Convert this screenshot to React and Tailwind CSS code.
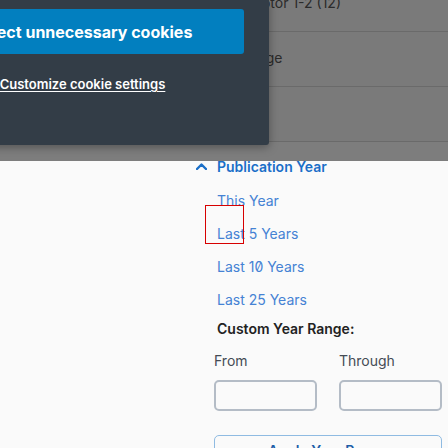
export default function App() {
  const links = ["This Year", "Last 5 Years", "Last 10 Years", "Last 25 Years"];
  const rows = ["Locomotor 1-2 (12)", "Language", "Format"];
  return (
    <div className="relative w-[448px] h-[448px] overflow-hidden bg-[#fafafa] font-['Inter',sans-serif] [font-feature-settings:'zero']">
      <div className="mt-[-23px] bg-[#f4f4f4]">
        {rows.map((r) => (
          <div
            key={r}
            className="h-[55px] border-b border-[#d4d4d4] pl-[217px] pt-[15px] text-[14px] leading-[22px] text-[#565656]"
          >
            {r}
          </div>
        ))}
      </div>

      <section className="pl-[196px] pt-[15px]">
        <div className="flex items-center gap-[10px] h-[20px]">
          <svg width="11" height="7" viewBox="0 0 11 7" className="mt-[-1px]">
            <polyline
              points="1,6 5.5,1.5 10,6"
              fill="none"
              stroke="#1a6fc8"
              strokeWidth="2.4"
              strokeLinecap="round"
              strokeLinejoin="round"
            />
          </svg>
          <span className="text-[14px] leading-[20px] font-semibold text-[#1a6fc8]">
            Publication Year
          </span>
        </div>

        <ul className="mt-[14px] flex flex-col gap-[13px] pl-[21px]">
          {links.map((l) => (
            <li key={l} className="text-[14px] leading-[20px] text-[#4582d4]">
              {l}
            </li>
          ))}
        </ul>

        <div className="mt-[9px] pl-[21px] text-[14px] leading-[20px] font-semibold text-[#222]">
          Custom Year Range:
        </div>

        <div className="mt-[12px] pl-[18px] w-[246px]">
          <div className="grid grid-cols-2 gap-[22px]">
            <div className="flex flex-col">
              <span className="text-[14px] leading-[20px] text-[#444b55]">From</span>
              <div className="mt-[9px] h-[31px] rounded-[5px] border-2 border-[#b4bcc6]" />
            </div>
            <div className="flex flex-col">
              <span className="text-[14px] leading-[20px] text-[#444b55]">Through</span>
              <div className="mt-[9px] h-[31px] rounded-[5px] border-2 border-[#b4bcc6]" />
            </div>
          </div>
          <div className="mt-[24px] rounded-[5px] border border-[#8fbbe2] py-[5px] text-center text-[14px] leading-[20px] font-semibold text-[#1e5fa8]">
            Apply Year Range
          </div>
        </div>
      </section>

      <div className="absolute left-0 top-0 w-full h-[161px] bg-black/50" />

      <div className="absolute left-[-104px] top-0 w-[373px] h-[145px] rounded-br-[3px] bg-[#333d47] px-[25px] shadow-[0_2px_10px_rgba(0,0,0,0.35)] flex flex-col items-center">
        <div className="mt-[9px] w-full h-[45px] rounded-[3px] bg-[#027fbf] flex items-center justify-center text-white text-[16px] font-bold">
          Reject unnecessary cookies
        </div>
        <div className="mt-[20px] text-white text-[13px] leading-[20px] font-semibold underline underline-offset-2">
          Customize cookie settings
        </div>
      </div>

      <div className="absolute left-[205px] top-[205px] w-[39px] h-[39px] border border-[#d70000]" />
    </div>
  );
}
